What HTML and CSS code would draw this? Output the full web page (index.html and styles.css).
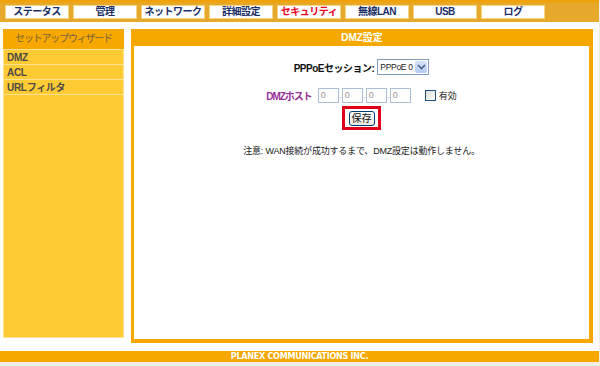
FILE: index.html
```html
<!DOCTYPE html>
<html>
  <head>
    <meta charset="utf-8">
    <title>DMZ設定</title>
    <link rel="stylesheet" href="styles.css">
  </head>
  <body>
    <div class="page">
      <div class="topbar">
        <a class="tab">ステータス</a>
        <a class="tab">管理</a>
        <a class="tab">ネットワーク</a>
        <a class="tab">詳細設定</a>
        <a class="tab active">セキュリティ</a>
        <a class="tab">無線LAN</a>
        <a class="tab">USB</a>
        <a class="tab">ログ</a>
      </div>

      <div class="main">
        <div class="side">
          <div class="side-head">セットアップウィザード</div>
          <a class="side-item">DMZ</a>
          <a class="side-item">ACL</a>
          <a class="side-item last">URLフィルタ</a>
        </div>

        <div class="panel">
          <div class="panel-head">DMZ設定</div>
          <div class="panel-body">
            <div class="row session">
              <span class="session-label">PPPoEセッション:</span>
              <div class="select">
                <span class="select-text">PPPoE 0</span>
                <span class="select-arrow">
                  <svg width="9" height="6" viewBox="0 0 9 6"><path d="M1 1 L4.5 4.5 L8 1" fill="none" stroke="#4d6185" stroke-width="1.6"/></svg>
                </span>
              </div>
            </div>

            <div class="row host">
              <span class="host-label">DMZホスト</span>
              <span class="ip">0</span><span class="dot">.</span>
              <span class="ip">0</span><span class="dot">.</span>
              <span class="ip">0</span><span class="dot">.</span>
              <span class="ip">0</span>
              <span class="check"></span>
              <span class="check-label">有効</span>
            </div>

            <div class="row">
              <span class="save-box"><span class="button">保存</span></span>
            </div>

            <p class="note">注意: WAN接続が成功するまで、DMZ設定は動作しません。</p>
          </div>
        </div>
      </div>

      <div class="footer">PLANEX COMMUNICATIONS INC.</div>
    </div>
  </body>
</html>
```

FILE: styles.css
```css
body {
  margin: 0;
  background-color: #efede6;
  font-family: "Liberation Sans", "Noto Sans CJK JP", sans-serif;
  font-size: 10px;
}

.page {
  width: 599px;
  height: 362px;
  background-color: #fff;
}

/* top menu */
.topbar {
  height: 22px;
  box-sizing: border-box;
  padding: 5px 0 0 5px;
  display: flex;
  gap: 4px;
  background: linear-gradient(to bottom, #f2a000 0, #e6a92b 4px);
}

.tab {
  width: 64px;
  height: 14px;
  box-sizing: border-box;
  border: 1px solid #f6d584;
  background-color: #fff;
  color: #1b2f66;
  font-weight: bold;
  text-align: center;
  line-height: 12px;
  letter-spacing: -0.5px;
}

.tab.active {
  color: #e8001c;
}

.main {
  display: flex;
  gap: 7px;
  padding: 7px 0 0 3px;
}

/* left menu */
.side {
  width: 121px;
  height: 309px;
  box-sizing: border-box;
  background-color: #ffcb35;
  border: 1px solid #ffe08f;
  border-top: none;
}

.side-head {
  height: 20px;
  margin: 0 -1px;
  background-color: #f6a800;
  color: #75623f;
  text-align: center;
  line-height: 20px;
  letter-spacing: -1.2px;
}

.side-item {
  display: block;
  height: 14px;
  border-top: 1px solid #ffe394;
  padding-left: 3px;
  color: #4d4a45;
  font-weight: bold;
  line-height: 15px;
  letter-spacing: -0.3px;
}

.side-item.last {
  border-bottom: 1px solid #ffe394;
}

/* main panel */
.panel {
  width: 462px;
  height: 314px;
  box-sizing: border-box;
  border: 4px solid #f6a800;
  border-left-width: 3px;
  border-top: none;
  display: flex;
  flex-direction: column;
}

.panel-head {
  height: 17px;
  margin: 0 -4px 0 -3px;
  background-color: #f6a800;
  color: #fff;
  font-weight: bold;
  text-align: center;
  line-height: 17px;
}

.panel-body {
  flex: 1;
  display: flex;
  flex-direction: column;
  align-items: center;
}

.row {
  display: flex;
  align-items: center;
  justify-content: center;
}

.session {
  margin-top: 13px;
  gap: 3px;
}

.session-label {
  color: #111;
  font-weight: bold;
  letter-spacing: -0.5px;
}

.select {
  width: 52px;
  height: 16px;
  box-sizing: border-box;
  border: 1px solid #7f9db9;
  display: flex;
  align-items: center;
  justify-content: space-between;
  padding-left: 2px;
  color: #222;
  font-size: 8.5px;
  letter-spacing: -0.3px;
  white-space: nowrap;
}

.select-arrow {
  width: 12px;
  height: 12px;
  margin-right: 1px;
  display: flex;
  align-items: center;
  justify-content: center;
  border-radius: 2px;
  background: linear-gradient(#d8e4fb, #b5c9f4);
}

.host {
  margin-top: 13px;
}

.host-label {
  color: #993399;
  font-weight: bold;
  margin-right: 6px;
  letter-spacing: -1px;
}

.ip {
  width: 21px;
  height: 15px;
  box-sizing: border-box;
  border: 1px solid #a9bfd6;
  padding-left: 2px;
  color: #9a9a9a;
  font-size: 9px;
  line-height: 13px;
}

.dot {
  width: 3px;
  color: #888;
  font-size: 8px;
  line-height: 15px;
  text-align: center;
}

.check {
  width: 9px;
  height: 9px;
  margin-left: 14px;
  border: 1px solid #1c5180;
  background: linear-gradient(135deg, #dcdcd7, #fff);
}

.check-label {
  margin-left: 3px;
  color: #222;
  font-size: 9px;
}

.save-box {
  margin-top: 3px;
  width: 39px;
  height: 24px;
  box-sizing: border-box;
  border: 3px solid #e0001b;
  display: flex;
  align-items: center;
  justify-content: center;
}

.button {
  width: 26px;
  height: 15px;
  box-sizing: border-box;
  border: 1px solid #003c74;
  border-radius: 3px;
  background: linear-gradient(#fff, #ece9df);
  color: #111;
  text-align: center;
  line-height: 13px;
}

.note {
  margin: 15px 0 0 0;
  color: #222;
  font-size: 9px;
  line-height: 12px;
  letter-spacing: -0.2px;
}

.footer {
  margin-top: 8px;
  height: 11px;
  background-color: #f6a800;
  color: #fff;
  font-family: "Liberation Sans Narrow", "DejaVu Sans Condensed", sans-serif;
  font-weight: bold;
  font-size: 9px;
  text-align: center;
  line-height: 11px;
  letter-spacing: -0.3px;
}
```
